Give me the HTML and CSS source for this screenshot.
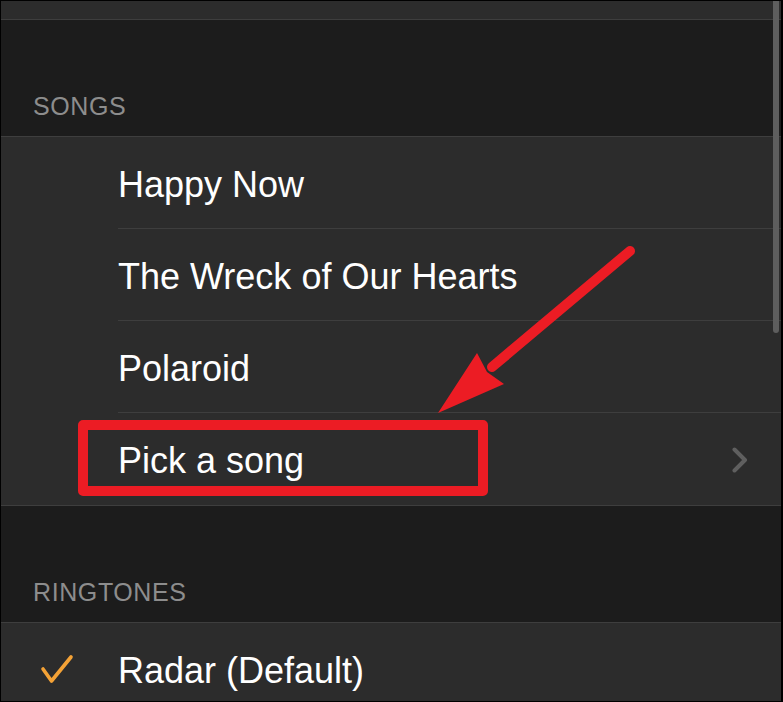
FILE: index.html
```html
<!DOCTYPE html>
<html lang="en">
<head>
<meta charset="utf-8">
<title>Sounds</title>
<link rel="stylesheet" href="styles.css">
</head>
<body>
<div class="screen">
  <div class="top-row"></div>

  <div class="section-header">SONGS</div>
  <div class="group">
    <div class="row">
      <div class="row-lead"></div>
      <div class="row-body"><span class="label">Happy Now</span></div>
    </div>
    <div class="row">
      <div class="row-lead"></div>
      <div class="row-body"><span class="label">The Wreck of Our Hearts</span></div>
    </div>
    <div class="row">
      <div class="row-lead"></div>
      <div class="row-body"><span class="label">Polaroid</span></div>
    </div>
    <div class="row">
      <div class="row-lead"></div>
      <div class="row-body">
        <span class="label">Pick a song</span>
        <svg class="chevron" width="16" height="26" viewBox="0 0 16 26"><path d="M2.5 2.5 L13 13 L2.5 23.5" fill="none" stroke="#5f5f5f" stroke-width="4" stroke-linecap="round" stroke-linejoin="round"/></svg>
      </div>
    </div>
  </div>

  <div class="section-header">RINGTONES</div>
  <div class="group">
    <div class="row">
      <div class="row-lead">
        <svg class="check" width="36" height="32" viewBox="0 0 36 32"><path d="M3 15 L11.5 27 L31 3" fill="none" stroke="#f4a236" stroke-width="3.6" stroke-linecap="round" stroke-linejoin="round"/></svg>
      </div>
      <div class="row-body"><span class="label">Radar (Default)</span></div>
    </div>
  </div>

  <div class="scrollbar"></div>

  <svg class="annotation" width="783" height="702" viewBox="0 0 783 702">
    <rect x="83" y="425" width="400" height="66" fill="none" stroke="#ec1c24" stroke-width="10" stroke-linejoin="round"/>
    <line x1="630" y1="251" x2="492" y2="367" stroke="#ec1c24" stroke-width="10" stroke-linecap="round"/>
    <polygon points="438,413 477,353 487,372 504,384" fill="#ec1c24"/>
  </svg>
</div>
</body>
</html>
```

FILE: styles.css
```css
* {
  box-sizing: border-box;
}

html, body {
  margin: 0;
  padding: 0;
  background: #000;
}

.screen {
  position: relative;
  width: 783px;
  height: 702px;
  overflow: hidden;
  background: #1c1c1c;
  border-top: 1px solid #000;
  border-left: 1px solid #000;
  border-right: 2px solid #000;
  border-bottom: 1px solid #000;
  font-family: "Liberation Sans", Arial, sans-serif;
}

.top-row {
  height: 19px;
  background: #2c2c2c;
  border-bottom: 1px solid #3e3e3e;
}

.section-header {
  height: 116px;
  display: flex;
  align-items: flex-end;
  padding: 0 0 15px 32px;
  font-size: 25px;
  line-height: 30px;
  letter-spacing: 0.6px;
  color: #8d8d8d;
  background: #1c1c1c;
}

.group {
  background: #2c2c2c;
  border-top: 1px solid #3e3e3e;
  border-bottom: 1px solid #3e3e3e;
}

.row {
  display: flex;
  height: 92px;
}

.row-lead {
  width: 117px;
  flex: none;
  display: flex;
  align-items: center;
  padding-left: 39px;
}

.row-body {
  flex: 1;
  display: flex;
  align-items: center;
  justify-content: space-between;
  padding-right: 33px;
  border-bottom: 1px solid #3e3e3e;
}

.row:last-child .row-body {
  border-bottom: none;
}

.label {
  font-size: 36px;
  color: #ffffff;
  white-space: nowrap;
  margin-top: 4px;
}

.chevron {
  display: block;
  margin-top: 1px;
}

.check {
  display: block;
  margin-top: 1px;
}

.scrollbar {
  position: absolute;
  top: 0;
  left: 772px;
  width: 6px;
  height: 332px;
  background: #5e5e5e;
  border-radius: 0 0 3px 3px;
}

.annotation {
  position: absolute;
  top: -1px;
  left: -1px;
  pointer-events: none;
}
```
